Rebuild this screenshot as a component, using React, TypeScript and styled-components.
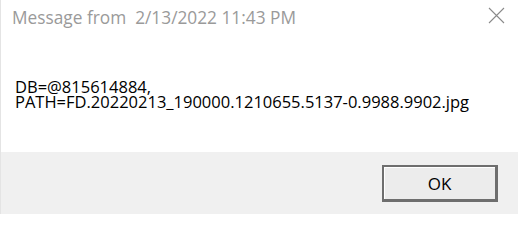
import styled, { createGlobalStyle } from "styled-components"

const GlobalStyle = createGlobalStyle`
  html, body {
    margin: 0;
    padding: 0;
    background: #ffffff;
  }
  body {
    font-family: "Open Sans", "Noto Sans", "Liberation Sans", sans-serif;
  }
`

const Dialog = styled.div`
  width: 518px;
  height: 214px;
  display: flex;
  flex-direction: column;
  background: #ffffff;
  border-left: 1px solid #e4e4e4;
  box-sizing: border-box;
  overflow: hidden;
`

const TitleBar = styled.div`
  display: flex;
  align-items: center;
  justify-content: space-between;
  height: 34px;
  flex-shrink: 0;
  padding: 0 12px 0 11px;
`

const Title = styled.span`
  font-size: 17.3px;
  color: #9a9a9a;
  white-space: pre;
`

const CloseButton = styled.button`
  border: none;
  background: transparent;
  padding: 0;
  margin-top: -4px;
  width: 20px;
  height: 20px;
  display: flex;
  align-items: center;
  justify-content: center;
  color: #8a8a8a;
`

const Body = styled.div`
  flex: 1;
  padding: 45px 0 0 14px;
  font-size: 16.5px;
  color: #000000;
`

const Line = styled.div`
  height: 15px;
  line-height: 15px;
  white-space: nowrap;
`

const Footer = styled.div`
  height: 62px;
  flex-shrink: 0;
  background: #f0f0f0;
  display: flex;
  justify-content: flex-end;
  align-items: flex-start;
  padding: 13px 20px 0 0;
  box-sizing: border-box;
`

const OkButton = styled.button`
  width: 116px;
  height: 37px;
  box-sizing: border-box;
  background: #ececec;
  border: 2px solid #6e6e6e;
  border-bottom-width: 3px;
  border-right-width: 3px;
  box-shadow: inset 1px 1px 0 #ffffff;
  font-family: "Open Sans", "Noto Sans", sans-serif;
  font-size: 17px;
  color: #000000;
  padding: 0;
`

export default function App() {
  return (
    <>
      <GlobalStyle />
      <Dialog>
        <TitleBar>
          <Title>Message from  2/13/2022 11:43 PM</Title>
          <CloseButton aria-label="Close">
            <svg width="17" height="17" viewBox="0 0 17 17">
              <path d="M1 1L16 16M16 1L1 16" stroke="currentColor" strokeWidth="1.1" />
            </svg>
          </CloseButton>
        </TitleBar>
        <Body>
          <Line>DB=@815614884,</Line>
          <Line>PATH=FD.20220213_190000.1210655.5137-0.9988.9902.jpg</Line>
        </Body>
        <Footer>
          <OkButton>OK</OkButton>
        </Footer>
      </Dialog>
    </>
  )
}
